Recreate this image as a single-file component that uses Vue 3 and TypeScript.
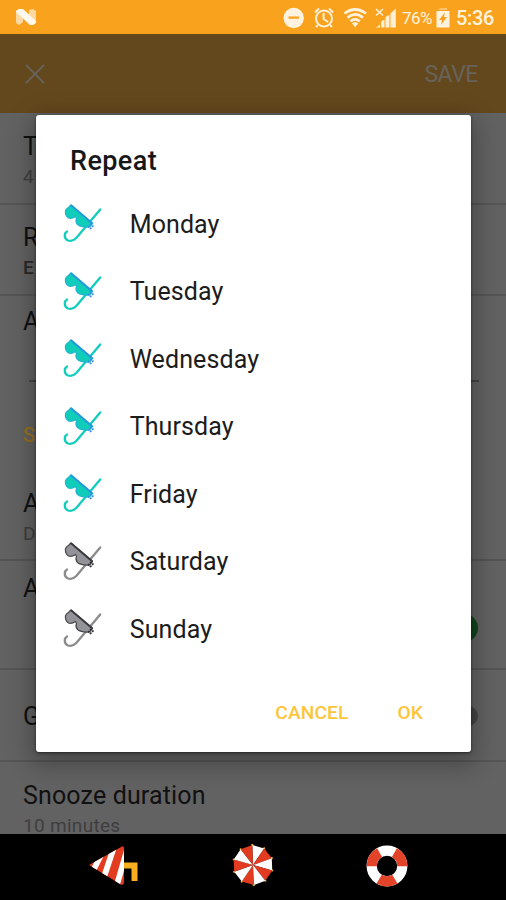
<script setup lang="ts">
interface Day { name: string; active: boolean }
const days: Day[] = [
  { name: 'Monday', active: true },
  { name: 'Tuesday', active: true },
  { name: 'Wednesday', active: true },
  { name: 'Thursday', active: true },
  { name: 'Friday', active: true },
  { name: 'Saturday', active: false },
  { name: 'Sunday', active: false },
]

// Ten alternating canopy panels of the beach umbrella
const point = (i: number): string => {
  const a = ((i * 36 - 92) * Math.PI) / 180
  return `${(21 + 20 * Math.cos(a)).toFixed(2)},${(21 + 20 * Math.sin(a)).toFixed(2)}`
}
const panels = Array.from({ length: 10 }, (_, i) => ({
  points: `21,21 ${point(i)} ${point(i + 1)}`,
  fill: i % 2 ? '#e23b20' : '#fff',
}))
const tips = Array.from({ length: 10 }, (_, i) => point(i).split(','))
</script>

<template>
  <div class="screen">
    <header class="status">
      <svg class="logo" width="22" height="18" viewBox="0 0 22 18">
        <path d="M1 3 L4 1 L8 5 V14 L4 17 L1 15Z M14 2 L18 1 L21 3 V14 L18 17 L14 13Z" fill="#ffd9a0" />
        <path d="M1 3 L4 1 H8 L21 13 V15 L18 17 H15 L1 4Z" fill="#fff8ec" />
      </svg>
      <div class="indicators">
        <svg width="144" height="24" viewBox="282 5 144 24" class="signals">
          <circle cx="293.7" cy="18" r="10.2" fill="#fff3df" />
          <path d="M288.5 17.6h10.5" stroke="#f7a11e" stroke-width="2.3" />
          <g fill="none" stroke="#fff0d8" stroke-width="2">
            <circle cx="324" cy="18.5" r="8" />
            <path d="M323.6 13v6l4.5 3M315 12.5l4-4M329 8.5l4 4M318 25l-2 2M330 25l2 2" />
          </g>
          <g fill="none" stroke="#fff3df" stroke-width="2.7">
            <path d="M344.5 13.5Q355 5.5 366 13.5M347.5 17.6Q355 11.3 363 17.6M350.5 21.3Q355 17.5 359.8 21.3" />
          </g>
          <path d="M352 23.3Q355 21.3 358.3 23.3L355.1 27.3Z" fill="#fff3df" />
          <path d="M376 9l7 6.5M383 9l-7 6.5" stroke="#fff0d8" stroke-width="1.5" />
          <path d="M376 27.5l4-3v3zM381 27.5v-6l3.5-2v8zM385.5 27.5V17l4-2.2v12.7zM390.5 27.5v-14l5.3-5v19z" fill="#ffefd5" />
        </svg>
        <span class="percent">76%</span>
        <svg class="battery" width="14" height="21" viewBox="0 0 14 21">
          <path d="M0.5 4h13v16.5H.5z" fill="#fff3df" />
          <path d="M3 3V1h8v2z" fill="#fbc36d" />
          <path d="M8.8 5.5L3 13h3l-1 5 6-8H8z" fill="#f7a11e" />
        </svg>
        <span class="clock">5:36</span>
      </div>
    </header>

    <div class="toolbar">
      <svg width="20" height="20" viewBox="0 0 20 20"><path d="M1 1l18 18M19 1L1 19" stroke="#68635a" stroke-width="1.8" /></svg>
      <span class="save">SAVE</span>
    </div>

    <main class="settings">
      <section class="row time"><h3>Time</h3><p>4</p></section>
      <section class="row repeat"><h3>Repeat</h3><p class="dark">E</p></section>
      <section class="row alarm-name"><h3>Alarm</h3><div class="field"></div><h4>SOUND</h4></section>
      <section class="row alarm-sound"><h3>Alarm</h3><p>D</p></section>
      <section class="row volume"><h3>Alarm</h3><i class="thumb green"></i></section>
      <section class="row gradual"><h3>Gradual</h3><i class="thumb"></i></section>
      <section class="row snooze"><h3>Snooze duration</h3><p>10 minutes</p></section>
    </main>

    <nav class="navbar">
      <svg class="back" width="50" height="42" viewBox="0 0 50 42">
        <defs><clipPath id="cone"><path d="M0 19L33 .5q2-1 2 2v34q-1 4-4 1.5Z" /></clipPath></defs>
        <path d="M33 16.5h15.5v18.5h-6v-12.5h-9.500z" fill="#f7ae20" />
        <g clip-path="url(#cone)">
          <path d="M0 0h36v42H0z" fill="#e23b20" />
          <path d="M12 9L4 25M25 1L15 31M38 4L27 42" stroke="#fff" stroke-width="5.8" />
        </g>
      </svg>
      <svg class="umbrella" width="42" height="42" viewBox="0 0 42 42">
        <circle v-for="(t, i) in tips" :key="`tip-${i}`" :cx="t[0]" :cy="t[1]" r="1.1" fill="#f7b621" />
        <polygon v-for="(p, i) in panels" :key="i" :points="p.points" :fill="p.fill" />
      </svg>
      <svg class="buoy" width="42" height="42" viewBox="0 0 42 42">
        <circle cx="21" cy="21" r="15.3" fill="none" stroke="#fff" stroke-width="10.2" />
        <circle cx="21" cy="21" r="15.3" fill="none" stroke="#e34328" stroke-width="10.2" pathLength="360" stroke-dasharray="62 58" stroke-dashoffset="-59" />
      </svg>
    </nav>

    <div class="dialog" role="dialog">
      <h2>Repeat</h2>
      <ul>
        <li v-for="day in days" :key="day.name" :class="{ active: day.active }">
          <svg width="44" height="44" viewBox="0 0 44 44">
            <path class="tube" d="M40.2 9.5L16.5 37.8Q12.5 42 8 40.5Q4.7 39 4.8 35.5Q4.8 32.8 7 31.5" />
            <path class="mask" d="M10.8 5L32.500 23.5L29.5 27Q21 27.500 17.500 24.5Q15 21.5 16.5 18.5L15.5 16.5Q12 19 8.5 18Q4.8 15.5 5.5 10.5Q6.5 8.5 9 7Z" />
            <path class="edge" d="M10.8 5L32.5 23.5" />
            <path class="clip" d="M28 27.5l4-4M30 29l3.5-3.5" />
          </svg>
          <span>{{ day.name }}</span>
        </li>
      </ul>
      <footer><span>CANCEL</span><span>OK</span></footer>
    </div>
  </div>
</template>

<style>
body { margin: 0; background: #000; }
</style>

<style scoped>
.screen { position: relative; width: 506px; height: 900px; overflow: hidden; display: flex; flex-direction: column; font-family: Roboto, sans-serif; background: #626262; }
h2, h3, h4, p, ul { margin: 0; padding: 0; font-weight: 400; }
.status { height: 34px; flex: none; box-sizing: border-box; background: #f9a21d; display: flex; justify-content: space-between; padding-left: 15px; padding-right: 11px; color: #fff3df; }
.logo { margin-top: 8px; }
.indicators { display: flex; align-items: flex-start; }
.signals { margin-top: 5px; margin-right: -24px; }
.percent { width: 34px; font-size: 17px; line-height: 20px; margin-top: 8px; letter-spacing: -.5px; }
.battery { margin-top: 7px; }
.clock { width: 39px; margin-left: 6px; margin-top: 7px; font-size: 20px; line-height: 22px; font-weight: 500; letter-spacing: -.3px; }
.toolbar { height: 79px; flex: none; box-sizing: border-box; display: flex; align-items: center; justify-content: space-between; padding: 0 28px 0 25px; background: #64481d; }
.save { font-size: 23px; line-height: 28px; color: #68635a; margin-top: 2px; letter-spacing: -.45px; }
.settings { flex: 1; min-height: 0; overflow: hidden; }
.row { position: relative; box-sizing: border-box; border-bottom: 2px solid #555; padding-left: 23px; }
.row h3 { font-size: 25px; line-height: 30px; color: #111; white-space: nowrap; }
.row p { font-size: 19px; line-height: 24px; color: #3e3e3e; }
.row p.dark { color: #292929; font-weight: 500; }
.time { height: 92px; padding-top: 19px; }
.time p { margin-top: 3px; }
.repeat { height: 91px; padding-top: 18px; }
.repeat p { margin-top: 3px; }
.alarm-name { height: 173px; padding-top: 11px; border-bottom: 0; }
.field { height: 43px; margin-left: 6px; margin-right: 27px; border-bottom: 2px solid #444; }
.row h4 { margin-top: 41px; font-size: 20px; line-height: 24px; font-weight: 500; color: #987021; }
.alarm-sound { height: 92px; padding-top: 20px; }
.alarm-sound p { margin-top: 3px; }
.volume { height: 109px; padding-top: 13px; }
.gradual { height: 92px; padding-top: 32px; }
.snooze { height: 73px; padding-top: 19px; border-bottom: 0; }
.row.snooze h3 { letter-spacing: .15px; }
.row.snooze p { margin-top: 3px; letter-spacing: .3px; }
.thumb { position: absolute; right: 28px; width: 20px; height: 20px; border-radius: 50%; background: #454545; top: 36px; }
.thumb.green { width: 28px; height: 28px; background: #12451b; top: 53px; }
.navbar { position: relative; z-index: 3; flex: none; height: 66px; background: #000; display: flex; align-items: flex-start; }
.back { margin: 12px 0 0 89px; }
.umbrella { margin: 10px 0 0 93px; }
.buoy { margin: 11px 0 0 92px; }
.dialog { position: absolute; z-index: 2; left: 36px; top: 115px; width: 435px; height: 637px; border-radius: 3px; background: #fff; box-shadow: 0 8px 25px 5px rgba(0, 0, 0, .28), 0 1px 3px rgba(0, 0, 0, .55); }
.dialog h2 { padding: 29px 0 0 34px; font-size: 27px; line-height: 34px; font-weight: 500; letter-spacing: .4px; color: #171717; }
.dialog ul { list-style: none; padding-top: 13px; }
.dialog li { height: 67.5px; display: flex; align-items: center; padding-left: 24px; box-sizing: border-box; }
.dialog li svg { margin-top: -5px; margin-right: 26px; }
.dialog li span { font-size: 25px; line-height: 34px; color: #1c1c1c; letter-spacing: .1px; margin-left: -.3px; }
.tube { fill: none; stroke: #8b8b8b; stroke-width: 2.3; stroke-linecap: round; }
.mask { fill: #929398; stroke: #48484c; stroke-width: 1.2; stroke-linejoin: round; }
.edge { stroke: #38383c; stroke-width: 1.8; }
.clip { stroke: #29292b; stroke-width: 1.7; stroke-dasharray: 2 1; }
.active .tube { stroke: #12cdbb; }
.active .mask { fill: #0fcdb8; stroke: #20b5cf; }
.active .edge { stroke: #2596dd; }
.active .clip { stroke: #368fe1; }
.dialog footer { display: flex; justify-content: flex-end; gap: 49px; padding: 35px 48px 0 0; font-size: 19.2px; line-height: 28px; font-weight: 500; letter-spacing: .1px; color: #fcc53c; }
</style>
